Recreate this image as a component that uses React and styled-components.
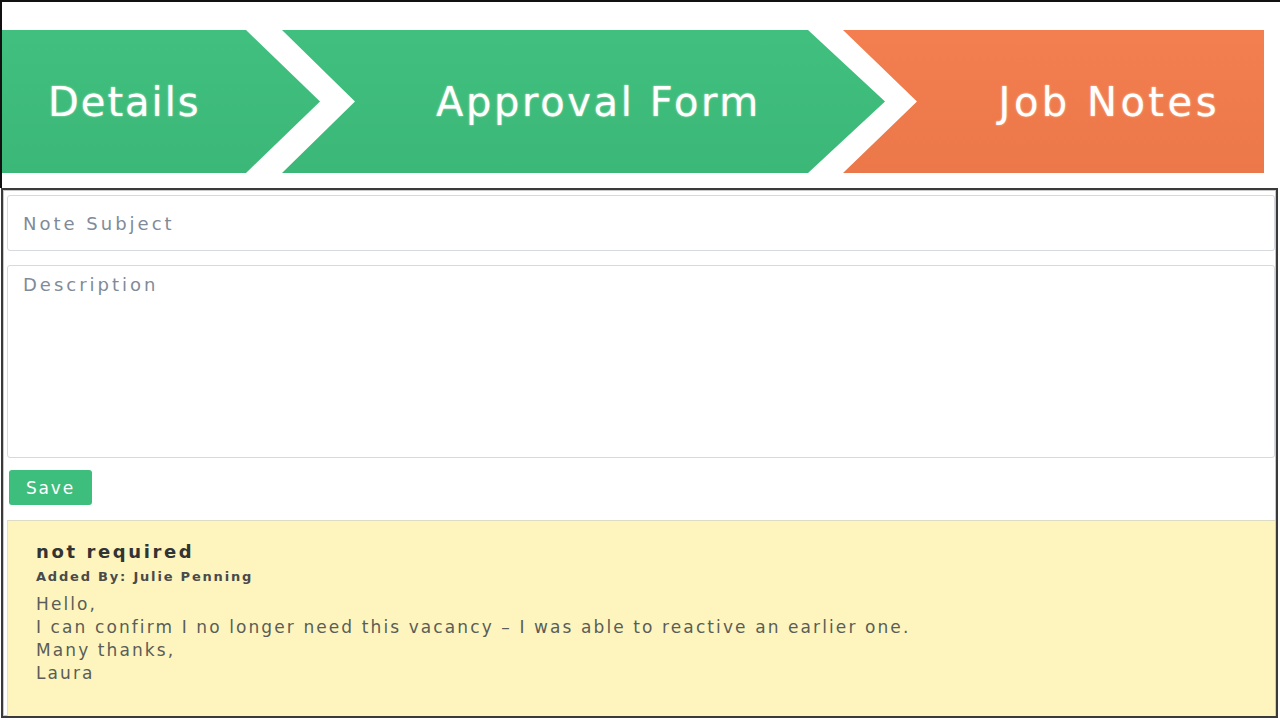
import React from "react"
import styled, { createGlobalStyle } from "styled-components"

const GlobalStyle = createGlobalStyle`
  html, body {
    margin: 0;
    padding: 0;
    background: #ffffff;
  }
  * {
    box-sizing: border-box;
  }
`

const theme = {
  green: "#3dbe7c",
  orange: "#f37c4c",
  font: `"DejaVu Sans", "Liberation Sans", sans-serif`,
}

const Page = styled.div`
  width: 1280px;
  height: 720px;
  display: flex;
  flex-direction: column;
  font-family: ${theme.font};
  overflow: hidden;
`

const TopFrame = styled.div`
  height: 188px;
  border-top: 2px solid #111;
  border-left: 2px solid #111;
  padding-top: 28px;
`

const Stepper = styled.div`
  display: flex;
  height: 143px;
`

const Step = styled.div`
  flex: none;
  width: ${props => props.width}px;
  margin-left: ${props => props.overlap || 0}px;
  height: 100%;
  display: flex;
  align-items: center;
  justify-content: ${props => props.align || "flex-start"};
  padding: ${props => props.pad || "0"};
  background: ${props => props.color};
  background-image: linear-gradient(
    180deg,
    rgba(255, 255, 255, 0.02),
    rgba(0, 0, 0, 0.03)
  );
  clip-path: ${props => props.shape};
  color: #ffffff;
  font-size: 40px;
  letter-spacing: ${props => props.spacing || 2}px;
  text-shadow: 0 0 2px rgba(255, 255, 230, 0.7);
`

const BottomFrame = styled.div`
  height: 530px;
  width: 1277px;
  margin-left: 1px;
  border: 2px solid #3a3a3a;
  box-shadow: inset 0 0 0 1px #c9c9c9;
  padding: 5px 1px 0 4px;
  display: flex;
  flex-direction: column;
`

const Field = styled.input`
  height: 56px;
  width: 100%;
  border: 1px solid #d6d9de;
  border-radius: 3px;
  padding: 0 15px;
  font-family: ${theme.font};
  font-size: 18px;
  letter-spacing: 3px;
  color: #444;
  outline: none;

  &::placeholder {
    color: #7f8b99;
  }
`

const TextArea = styled.textarea`
  height: 193px;
  width: 100%;
  margin-top: 14px;
  border: 1px solid #d6d9de;
  border-radius: 3px;
  padding: 8px 15px;
  font-family: ${theme.font};
  font-size: 18px;
  letter-spacing: 3px;
  color: #444;
  resize: none;
  outline: none;

  &::placeholder {
    color: #7f8b99;
  }
`

const SaveButton = styled.button`
  align-self: flex-start;
  margin: 12px 0 0 2px;
  width: 83px;
  height: 35px;
  border: none;
  border-radius: 3px;
  background: ${theme.green};
  color: #ffffff;
  font-family: ${theme.font};
  font-size: 17px;
  letter-spacing: 1.8px;
  padding: 0;
`

const NoteCard = styled.div`
  flex: 1;
  margin-top: 15px;
  background: #fdf5bd;
  border-top: 1px solid #dedbc4;
  border-left: 1px solid #e4e0c6;
  padding: 20px 28px;
`

const NoteTitle = styled.div`
  font-size: 18px;
  line-height: 22px;
  font-weight: bold;
  letter-spacing: 2.6px;
  color: #333333;
`

const NoteMeta = styled.div`
  margin-top: 6px;
  font-size: 13px;
  line-height: 16px;
  font-weight: bold;
  letter-spacing: 1.8px;
  color: #4a4a4a;
`

const NoteBody = styled.div`
  margin-top: 8px;
  font-size: 17px;
  line-height: 23px;
  letter-spacing: 2.1px;
  color: #5a5d58;
`

const steps = [
  {
    label: "Details",
    width: 318,
    color: theme.green,
    pad: "0 0 0 46px",
    spacing: 2,
    shape: "polygon(0 0, 244px 0, 318px 50%, 244px 100%, 0 100%)",
  },
  {
    label: "Approval Form",
    width: 603,
    overlap: -38,
    color: theme.green,
    align: "center",
    pad: "0 0 0 30px",
    spacing: 2.6,
    shape:
      "polygon(0 0, 526px 0, 603px 50%, 526px 100%, 0 100%, 73px 50%)",
  },
  {
    label: "Job Notes",
    width: 421,
    overlap: -42,
    color: theme.orange,
    align: "flex-end",
    pad: "0 44px 0 0",
    spacing: 3.5,
    shape: "polygon(0 0, 100% 0, 100% 100%, 0 100%, 74px 50%)",
  },
]

const App = () => (
  <Page>
    <GlobalStyle />
    <TopFrame>
      <Stepper>
        {steps.map(step => (
          <Step
            key={step.label}
            width={step.width}
            overlap={step.overlap}
            color={step.color}
            align={step.align}
            pad={step.pad}
            spacing={step.spacing}
            shape={step.shape}
          >
            {step.label}
          </Step>
        ))}
      </Stepper>
    </TopFrame>
    <BottomFrame>
      <Field placeholder="Note Subject" />
      <TextArea placeholder="Description" />
      <SaveButton>Save</SaveButton>
      <NoteCard>
        <NoteTitle>not required</NoteTitle>
        <NoteMeta>Added By: Julie Penning</NoteMeta>
        <NoteBody>
          Hello,
          <br />
          I can confirm I no longer need this vacancy – I was able to reactive
          an earlier one.
          <br />
          Many thanks,
          <br />
          Laura
        </NoteBody>
      </NoteCard>
    </BottomFrame>
  </Page>
)

export default App
